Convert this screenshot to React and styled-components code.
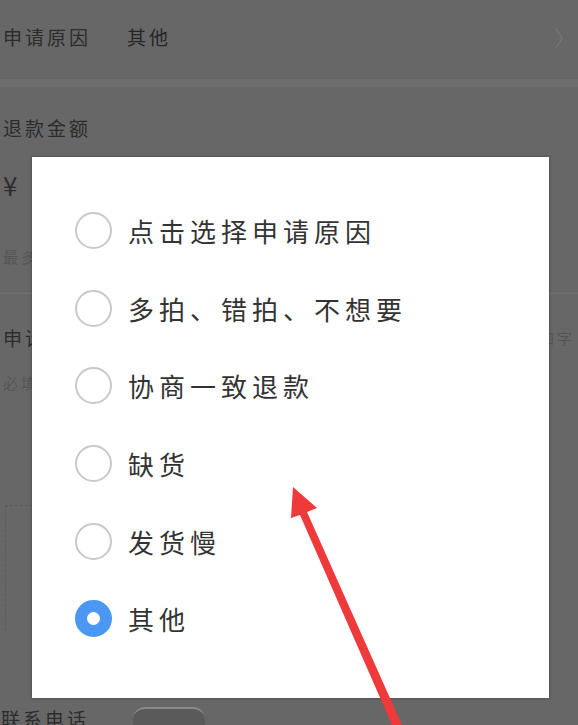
import React from 'react';
import styled, { createGlobalStyle } from 'styled-components';

const Global = createGlobalStyle`
  html, body { margin: 0; padding: 0; }
  body {
    width: 578px;
    height: 725px;
    overflow: hidden;
    font-family: "Noto Sans CJK SC", "Noto Sans", sans-serif;
  }
`;

const Page = styled.div`
  position: relative;
  width: 578px;
  height: 725px;
  overflow: hidden;
  background: #676767;
  color: #2c2c2c;
`;

const TopRow = styled.div`
  height: 72px;
  margin-bottom: 6px;
  display: flex;
  align-items: center;
  padding: 0 3px;
  font-size: 19px;
  letter-spacing: 3px;
`;

const Value = styled.span`
  margin-left: 36px;
  color: #262626;
`;

const Chevron = styled.span`
  margin-left: auto;
  color: #7a7a7a;
  font-size: 22px;
  font-weight: 300;
  margin-right: -4px;
`;

const Divider = styled.div`
  height: ${(p) => p.h || 8}px;
  background: #6e6e6e;
  border-top: 1px solid #626262;
`;

const Section = styled.div`
  padding: ${(p) => p.top || 20}px 3px 0;
`;

const Label = styled.div`
  font-size: ${(p) => p.size || 19}px;
  letter-spacing: 3px;
  color: #2c2c2c;
  height: ${(p) => p.h || 40}px;
  display: flex;
  align-items: center;
  justify-content: space-between;
`;

const Faint = styled.span`
  color: #555;
  font-size: 15px;
`;

const DashedBox = styled.div`
  margin: 98px 0 0 2px;
  height: 125px;
  width: 120px;
  border-left: 1px dashed #5a5a5a;
  border-top: 1px dashed #5a5a5a;
`;

const BottomRow = styled.div`
  position: absolute;
  left: 0;
  right: 0;
  top: 705px;
  display: flex;
  align-items: center;
  gap: 44px;
  padding-left: 1px;
  font-size: 19px;
  letter-spacing: 3px;
`;

const Pill = styled.div`
  width: 72px;
  height: 22px;
  border-radius: 12px 12px 0 0;
  background: #5a5a5a;
  border-top: 2px solid #8a8a8a;
`;

const Dialog = styled.div`
  position: absolute;
  left: 32px;
  top: 157px;
  width: 517px;
  height: 541px;
  box-sizing: border-box;
  background: #fff;
  box-shadow: 0 0 3px rgba(0, 0, 0, 0.35);
  padding: 35px 0 0 43px;
  display: flex;
  flex-direction: column;
`;

const Option = styled.div`
  height: 77.6px;
  display: flex;
  align-items: center;
  gap: 16px;
`;

const Radio = styled.span`
  box-sizing: border-box;
  width: 37px;
  height: 37px;
  border-radius: 50%;
  flex: none;
  border: ${(p) => (p.checked ? '12px solid #4a98f4' : '2px solid #c9c9c9')};
  background: #fff;
`;

const OptionText = styled.span`
  font-size: 26px;
  letter-spacing: 5px;
  color: #333;
`;

const Arrow = styled.svg`
  position: absolute;
  left: 0;
  top: 0;
  pointer-events: none;
`;

const reasons = [
  '点击选择申请原因',
  '多拍、错拍、不想要',
  '协商一致退款',
  '缺货',
  '发货慢',
  '其他',
];

export default function App() {
  return (
    <Page>
      <Global />
      <TopRow>
        申请原因
        <Value>其他</Value>
        <Chevron>〉</Chevron>
      </TopRow>
      <Divider />
      <Section>
        <Label>退款金额</Label>
        <Label size={26} h={74}>¥</Label>
        <Label h={70}>
          <Faint>最多</Faint>
        </Label>
      </Section>
      <Divider h={2} />
      <Section top={23}>
        <Label>
          <span>申请</span>
          <Faint>加字</Faint>
        </Label>
        <Label h={50}>
          <Faint>必填</Faint>
        </Label>
        <DashedBox />
      </Section>
      <BottomRow>
        联系电话
        <Pill />
      </BottomRow>

      <Dialog>
        {reasons.map((r, i) => (
          <Option key={r}>
            <Radio checked={i === reasons.length - 1} />
            <OptionText>{r}</OptionText>
          </Option>
        ))}
      </Dialog>

      <Arrow width="578" height="725" viewBox="0 0 578 725">
        <polygon points="293,487 317,508 307,512 402,725 392,725 300,515 291,518" fill="#ee3a3a" />
      </Arrow>
    </Page>
  );
}
